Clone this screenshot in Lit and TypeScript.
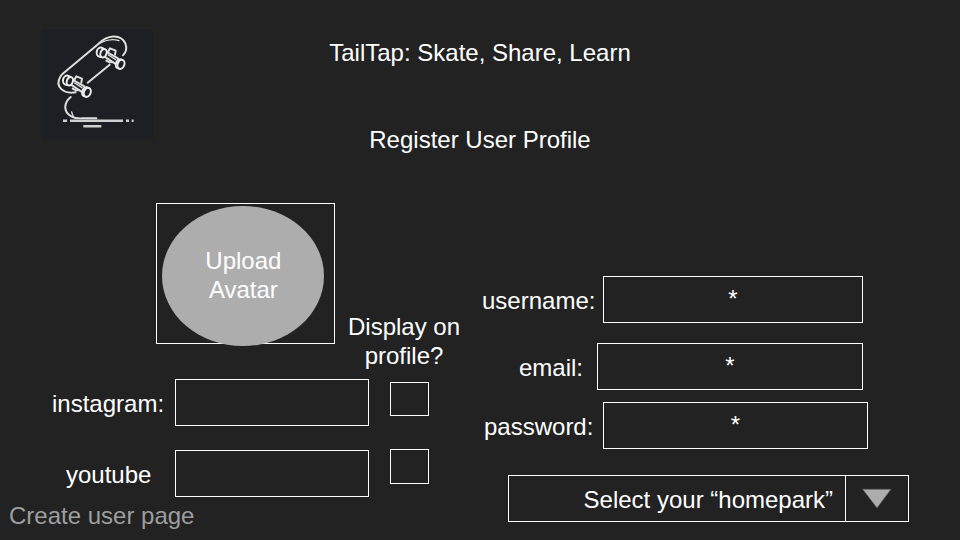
import { LitElement, html, css, svg } from "lit";
import { customElement, property } from "lit/decorators.js";

@customElement("skate-logo")
class SkateLogo extends LitElement {
  static styles = css`
    :host { display: block; width: 111px; height: 111px; background: #1e1f24; }
    svg { display: block; width: 100%; height: 100%; fill: none; stroke: #dededf; stroke-width: 6; stroke-linecap: round; stroke-linejoin: round; }
    .wheel { stroke: #ececec; stroke-width: 6; fill: #1e1f24; }
    .bar { stroke: #cfcfcf; stroke-width: 7.5; stroke-linecap: butt; }
    .fine { stroke-width: 4; }
  `;

  private truck(x: number, y: number) {
    return svg`
      <g transform="translate(${x} ${y})">
        <path d="M21 -1l6 -11 17 7 -2 12 M16 25l10 5 9 -1"></path>
        <path d="M15 -2l36 20 M11 13l30 20"></path>
        <path class="fine" d="M22 8l22 14"></path>
        <ellipse class="wheel" cx="-1" cy="0" rx="12" ry="14" transform="rotate(12)"></ellipse>
        <ellipse class="wheel" cx="8" cy="0" rx="9" ry="13" transform="rotate(20)"></ellipse>
        <ellipse class="wheel" cx="54" cy="34" rx="9" ry="14" transform="rotate(20 54 34)"></ellipse>
        <ellipse class="wheel" cx="60" cy="36" rx="10" ry="14" transform="rotate(20 60 36)"></ellipse>
      </g>`;
  }

  render() {
    return html`<svg viewBox="21 27 333 333">
      <path d="M122 217C84 223 59 199 76 170Q79 165 85 160L190 72C216 44 257 40 271 70Q279 91 264 106"></path>
      <path class="fine" d="M196 69Q224 53 252 62"></path>
      <path d="M158 188L224 134"></path>
      <path d="M107 231C87 248 83 274 109 289Q121 296 142 295L184 295"></path>
      <path class="fine" d="M110 276L115 291"></path>
      <path class="bar" d="M84 302h12M105 302h159M273 302h9M290 302h6M145 319h54"></path>
      ${this.truck(198, 97)}
      ${this.truck(97, 181)}
    </svg>`;
  }
}

@customElement("form-row")
class FormRow extends LitElement {
  @property() label = "";
  @property() value = "";
  static styles = css`
    :host { display: grid; grid-template-columns: var(--label, 112px) var(--field, 194px); column-gap: var(--gap, 11px); height: 47px; }
    .label { line-height: 29px; padding-top: 10px; white-space: nowrap; }
    .field { box-sizing: border-box; border: 1px solid #fff; padding-bottom: 2px; display: flex; align-items: center; justify-content: center; }
  `;
  render() {
    return html`<span class="label">${this.label}</span><div class="field">${this.value}</div>`;
  }
}

@customElement("app-root")
class AppRoot extends LitElement {
  static styles = css`
    :host { display: flex; flex-direction: column; box-sizing: border-box; width: 960px; height: 540px; overflow: hidden; background: #222; color: #fff; font: 24px/29px "Liberation Sans", Arial, sans-serif; }
    header { display: grid; grid-template-columns: 1fr auto 1fr; height: 174px; padding: 29px 42px 0; box-sizing: border-box; }
    .titles { padding-top: 9px; display: flex; flex-direction: column; gap: 58px; text-align: center; }
    main { display: grid; grid-template-columns: 482px 1fr; height: 326px; }
    .left { padding: 29px 0 0 52px; }
    .top { display: flex; height: 176px; box-sizing: border-box; padding-left: 104px; }
    .frame { box-sizing: border-box; width: 179px; height: 141px; border: 1px solid #fff; padding: 2px 0 0 5.4px; }
    .avatar { box-sizing: border-box; width: 162px; height: 140px; padding: 0 0 2px 0; border-radius: 50%; background: #adadad; display: flex; align-items: center; justify-content: center; text-align: center; }
    .question { width: 138px; margin-top: 109px; text-align: center; }
    .social { display: flex; gap: 21px; }
    .rows { display: grid; gap: 24px; }
    .yt { --label: 98px; padding-left: 14px; }
    .checks { display: flex; flex-direction: column; gap: 33px; padding-top: 3px; }
    .check { box-sizing: border-box; width: 39px; height: 34px; border: 1px solid #fff; }
    .tall { height: 35px; }
    .right { padding-top: 102px; }
    .user { --label: 113px; --gap: 8px; --field: 260px; }
    .email { --label: 64px; --gap: 14px; --field: 266px; margin: 20px 0 12px 37px; }
    .pass { --label: 111px; --gap: 8px; --field: 265px; margin-left: 2px; }
    .select { box-sizing: border-box; margin: 26px 0 0 26px; width: 401px; height: 47px; border: 1px solid #fff; display: grid; grid-template: 45px / 1fr 63px; }
    .choice { text-align: right; padding-right: 12px; line-height: 47px; }
    .arrow { box-sizing: border-box; border-left: 1px solid #fff; display: flex; justify-content: center; padding-top: 12px; }
    .arrow svg { width: 30px; height: 21px; }
    footer { padding: 1px 0 0 9px; color: #9e9e9e; }
  `;

  render() {
    return html`
      <header>
        <skate-logo></skate-logo>
        <div class="titles"><div>TailTap: Skate, Share, Learn</div><div>Register User Profile</div></div>
      </header>
      <main>
        <section class="left">
          <div class="top">
            <div class="frame"><div class="avatar">Upload<br />Avatar</div></div>
            <div class="question">Display on<br />profile?</div>
          </div>
          <div class="social">
            <div class="rows">
              <form-row label="instagram:"></form-row>
              <form-row class="yt" label="youtube"></form-row>
            </div>
            <div class="checks"><div class="check"></div><div class="check tall"></div></div>
          </div>
        </section>
        <section class="right">
          <form-row class="user" label="username:" value="*"></form-row>
          <form-row class="email" label="email:" value="*"></form-row>
          <form-row class="pass" label="password:" value="*"></form-row>
          <div class="select">
            <span class="choice">Select your “homepark”</span>
            <div class="arrow"><svg viewBox="0 0 30 21"><path d="M.6 1.2H29L15 20Z" fill="#adadad" stroke="#595959" stroke-width=".7"></path></svg></div>
          </div>
        </section>
      </main>
      <footer>Create user page</footer>
    `;
  }
}
